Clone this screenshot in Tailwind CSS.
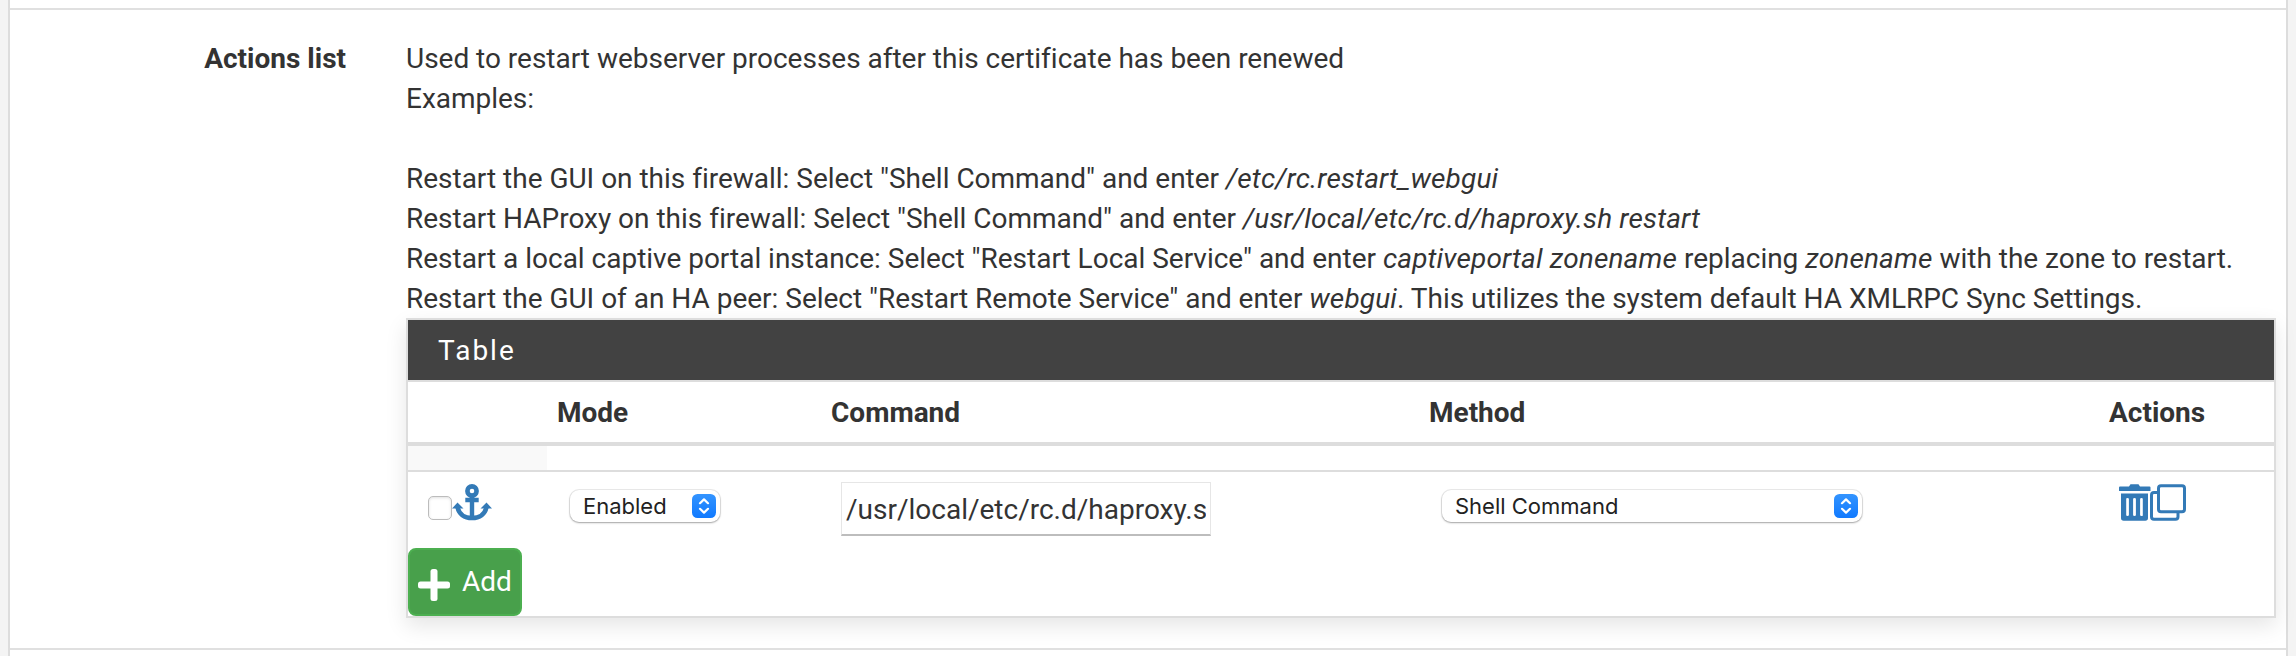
<!DOCTYPE html>
<html lang="en">
<head>
<meta charset="utf-8">
<title>Actions list</title>
<script src="https://cdn.jsdelivr.net/npm/@tailwindcss/browser@4"></script>
</head>
<body class="h-[656px] overflow-hidden bg-[#f4f4f4] font-[Roboto,sans-serif] text-[28px] leading-10 text-[#333]">
<div class="ml-2 flex h-[656px] w-[2280px] flex-col border-x-2 border-[#ddd] bg-white">
  <div class="h-2 shrink-0"></div>
  <section class="flex h-[642px] shrink-0 border-y-2 border-[#e0e0e0] pt-[29px]">
    <div class="w-[336px] shrink-0 text-right font-bold">Actions list</div>
    <div class="ml-[60px] w-[1870px] shrink-0">
      <p class="-mb-px whitespace-nowrap tracking-[-0.015px] [&_i]:tracking-[0.14px]">Used to restart webserver processes after this certificate has been renewed<br>Examples:<br><br>Restart the GUI on this firewall: Select "Shell Command" and enter <i>/etc/rc.restart_webgui</i><br>Restart HAProxy on this firewall: Select "Shell Command" and enter <i>/usr/local/etc/rc.d/haproxy.sh restart</i><br>Restart a local captive portal instance: Select "Restart Local Service" and enter <i>captiveportal zonename</i> replacing <i>zonename</i> with the zone to restart.<br>Restart the GUI of an HA peer: Select "Restart Remote Service" and enter <i>webgui</i>. This utilizes the system default HA XMLRPC Sync Settings.</p>
      <div class="h-[300px] border-2 border-[#ddd] bg-white shadow-[0_8px_20px_0_rgba(0,0,0,0.1)]">
        <h2 class="h-[60px] bg-[#424242] pt-[11px] pl-[30px] font-normal tracking-[2px] text-white">Table</h2>
        <div class="grid h-[66px] grid-cols-[139px_274px_598px_680px_1fr] border-t-2 border-b-4 border-[#ddd] pt-[11px] font-bold">
          <div></div><div class="pl-2.5">Mode</div><div class="pl-2.5">Command</div><div class="pl-2.5">Method</div><div class="pl-2.5">Actions</div>
        </div>
        <div class="h-[26px] border-b-2 border-[#ddd]"><div class="h-6 w-[139px] bg-[#f9f9f9]"></div></div>
        <div class="grid h-[76px] grid-cols-[139px_274px_598px_680px_1fr]">
          <div class="flex pt-3 pl-5">
            <div class="mt-3 size-6 rounded-[5px] border border-[#bcbcbc] bg-white shadow-[inset_0_1px_3px_rgba(0,0,0,0.12)]"></div>
            <svg class="h-[37px] w-10" viewBox="0 0 40 37" fill="none" stroke="#337ab7">
              <circle cx="20" cy="7" r="4.6" stroke-width="4.6"/>
              <path d="M20 11V33M13.3 16H26.7" stroke-width="4.4"/>
              <path d="M5.5 22.5C6.5 30 12.500 34 20 34S33.500 30 34.500 22.500" stroke-width="4.600"/>
              <path d="M0 24.500L5.500 18.500L11.500 24.500ZM28.500 24.500L34.500 18.500L40 24.500Z" fill="#337ab7" stroke="none"/>
            </svg>
          </div>
          <div class="pt-[18px] pl-[23px]">
            <div class="flex h-8 w-[150px] items-center justify-between rounded-[9px] bg-white pr-1 pl-[13px] font-[Inter,sans-serif] text-[22px] leading-8 text-[#222] shadow-[0_0_0_1px_rgba(0,0,0,0.08),0_1px_2px_rgba(0,0,0,0.3)]"><span>Enabled</span>
              <svg class="size-6" viewBox="0 0 24 24"><defs><linearGradient id="blue" x2="0" y2="1"><stop stop-color="#3394ff"/><stop offset="1" stop-color="#117aff"/></linearGradient></defs><rect width="24" height="24" rx="5.500" fill="url(#blue)"/><path d="M8 9.200L12 5.400L16 9.200M8 14.800L12 18.600L16 14.800" fill="none" stroke="#fff" stroke-width="2.200" stroke-linecap="round" stroke-linejoin="round"/></svg>
            </div>
          </div>
          <div class="pt-2.5 pl-5">
            <input type="text" value="/usr/local/etc/rc.d/haproxy.sh restart" class="block h-[54px] w-[370px] border border-b-2 border-[#e6e6e6] border-b-[#bdbdbd] px-1 pt-0.5 leading-10">
          </div>
          <div class="pt-[18px] pl-[23px]">
            <div class="flex h-8 w-[420px] items-center justify-between rounded-[9px] bg-white pr-1 pl-[13px] font-[Inter,sans-serif] text-[22px] leading-8 text-[#222] shadow-[0_0_0_1px_rgba(0,0,0,0.08),0_1px_2px_rgba(0,0,0,0.3)]"><span>Shell Command</span>
              <svg class="size-6" viewBox="0 0 24 24"><rect width="24" height="24" rx="5.500" fill="url(#blue)"/><path d="M8 9.200L12 5.400L16 9.200M8 14.800L12 18.600L16 14.800" fill="none" stroke="#fff" stroke-width="2.200" stroke-linecap="round" stroke-linejoin="round"/></svg>
            </div>
          </div>
          <div class="flex pt-3 pl-5">
            <svg class="h-[37px] w-[31px] overflow-visible" viewBox="0 0 31 37" fill="#337ab7">
              <path d="M1 2.500H10L11.500 0.300H19.500L21 2.500H30.500Q31.500 2.500 31.500 3.500V7H0V3.500Q0 2.500 1 2.500Z"/>
              <path fill-rule="evenodd" d="M2 9.500H29V34Q29 36.700 26.300 36.700H4.700Q2 36.700 2 34ZM7.200 15V31Q7.200 32 8.500 32T9.900 31V15Q9.900 14 8.500 14T7.200 15ZM14.100 15V31Q14.100 32 15.500 32T16.900 31V15Q16.900 14 15.500 14T14.100 15ZM21.100 15V31Q21.100 32 22.500 32T23.800 31V15Q23.800 14 22.500 14T21.100 15Z"/>
            </svg>
            <svg class="h-[37px] w-9" viewBox="0 0 36 37" fill="none" stroke="#337ab7" stroke-width="3"><rect x="8.500" y="1.800" width="26" height="26" rx="2.500"/><path d="M8.500 8.500H4Q1.500 8.500 1.500 11V32.700Q1.500 35.200 4 35.200H25.500Q28 35.200 28 32.700V28"/></svg>
          </div>
        </div>
        <button class="flex h-[68px] w-[114px] rounded-lg border-2 border-[#4caf50] bg-[#48a04b] pl-2 text-white">
          <svg class="mt-[19px] size-8" viewBox="0 0 32 32" fill="#fff"><rect x="12.500" width="7" height="32" rx="2.500"/><rect y="12.500" width="32" height="7" rx="2.500"/></svg>
          <span class="mt-3 ml-3">Add</span>
        </button>
      </div>
    </div>
  </section>
</div>
</body>
</html>
